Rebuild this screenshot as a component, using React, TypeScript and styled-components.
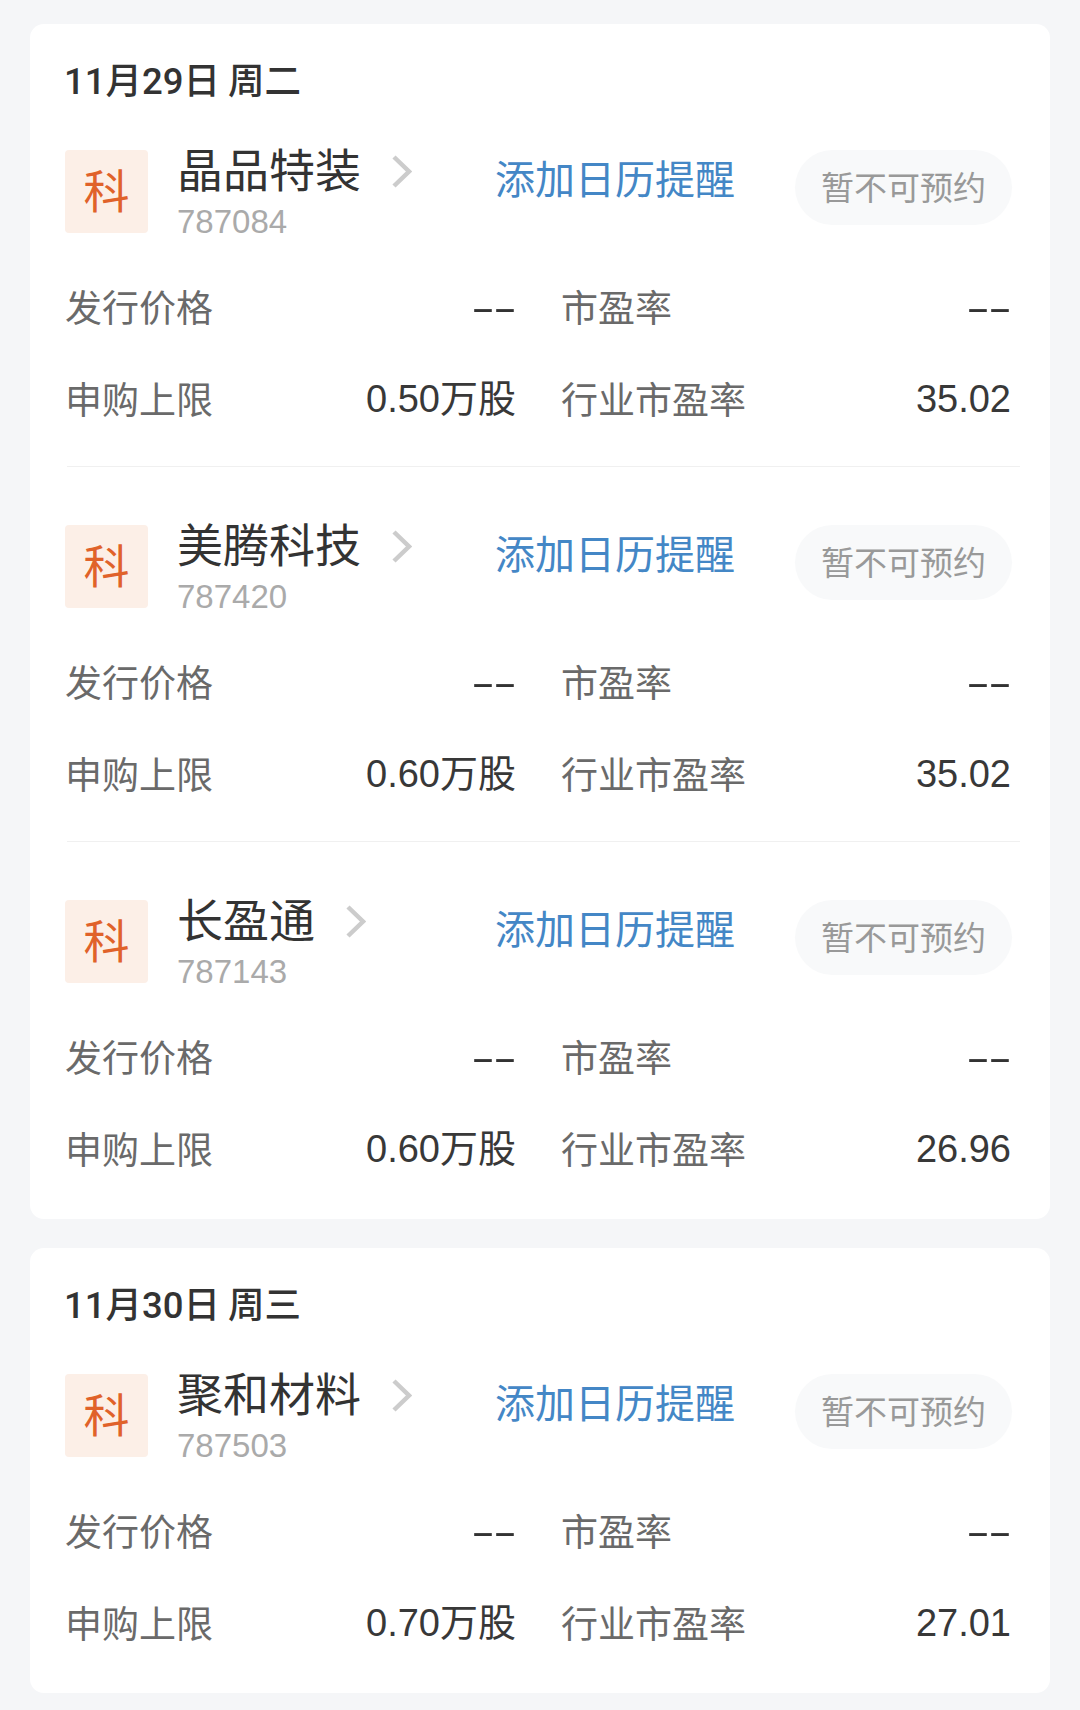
import React from "react";
import styled, { createGlobalStyle } from "styled-components";

const Global = createGlobalStyle`
  html, body { margin: 0; padding: 0; background: #f5f6f8; }
  body { font-family: "Liberation Sans", "Noto Sans CJK SC", sans-serif; }
  * { box-sizing: border-box; }
`;

const Page = styled.div`
  width: 1080px;
  height: 1710px;
  padding: 24px 30px 0;
  display: flex;
  flex-direction: column;
  gap: 29px;
  overflow: hidden;
`;

const Card = styled.section`
  width: 1020px;
  background: #ffffff;
  border-radius: 14px;
  padding: 0 0 25px 35px;
`;

const DateTitle = styled.h2`
  height: 126px;
  margin: 0 0 0 -1px;
  padding-top: 33px;
  font-family: Roboto, "Noto Sans CJK SC", sans-serif;
  font-size: 36.5px;
  line-height: 50px;
  font-weight: 500;
  word-spacing: -1px;
  color: #333333;
  white-space: pre;
`;

const Entry = styled.div`
  width: 955px;
  & + & {
    margin-top: 58px;
  }
`;

const Head = styled.div`
  display: flex;
  align-items: flex-start;
  height: 83px;
`;

const Identity = styled.div`
  width: 430px;
  flex: none;
  display: flex;
  align-items: flex-start;
`;

const Badge = styled.div`
  width: 83px;
  height: 83px;
  flex: none;
  display: flex;
  align-items: center;
  justify-content: center;
  background: #fcefe7;
  border-radius: 4px;
  color: #e0622a;
  font-size: 46px;
  line-height: 1;
`;

const Info = styled.div`
  margin-left: 29px;
  display: flex;
  flex-direction: column;
`;

const NameRow = styled.div`
  display: flex;
  align-items: center;
  height: 42px;
`;

const Name = styled.span`
  font-size: 46px;
  line-height: 42px;
  color: #333333;
  white-space: nowrap;
`;

const Chevron = styled.svg`
  width: 20px;
  height: 33px;
  margin-left: 31px;
  flex: none;
  fill: none;
  stroke: #cccccc;
  stroke-width: 4.5;
`;

const Code = styled.div`
  margin-top: 18px;
  font-size: 33px;
  line-height: 24px;
  color: #aaaaaa;
`;

const CalendarLink = styled.a`
  width: 300px;
  flex: none;
  font-size: 40px;
  line-height: 60px;
  color: #4487c6;
`;

const Pill = styled.div`
  width: 217px;
  height: 75px;
  flex: none;
  border-radius: 38px;
  background: #f8f9fa;
  padding-bottom: 4px;
  display: flex;
  align-items: center;
  justify-content: center;
  font-size: 33px;
  color: #999999;
`;

const Stats = styled.div`
  margin-top: 27px;
  width: 946px;
  display: grid;
  grid-template-columns: 451px 450px;
  column-gap: 45px;
  grid-auto-rows: 92px;
`;

const Stat = styled.div`
  display: flex;
  align-items: center;
  justify-content: space-between;
`;

const Label = styled.span`
  padding-top: 8px;
  font-size: 37px;
  line-height: 44px;
  color: #6a6a6a;
`;

const Value = styled.span`
  padding-top: 2px;
  font-size: 38px;
  line-height: 44px;
  color: #383838;
`;

const Dash = styled.span`
  font-size: 36px;
  line-height: 1;
  color: #333333;
  letter-spacing: -1px;
  transform: translate(-1px, 2px) scaleX(2);
  transform-origin: right center;
`;

const Divider = styled.hr`
  border: 0;
  height: 1px;
  margin: 22px 0 0 2px;
  width: 953px;
  background: #f0f0f0;
`;

type Item = { name: string; code: string; limit: string; pe: string };

const groups: { date: string; items: Item[] }[] = [
  {
    date: "11月29日 周二",
    items: [
      { name: "晶品特装", code: "787084", limit: "0.50万股", pe: "35.02" },
      { name: "美腾科技", code: "787420", limit: "0.60万股", pe: "35.02" },
      { name: "长盈通", code: "787143", limit: "0.60万股", pe: "26.96" },
    ],
  },
  {
    date: "11月30日 周三",
    items: [{ name: "聚和材料", code: "787503", limit: "0.70万股", pe: "27.01" }],
  },
];

export default function App() {
  return (
    <>
      <Global />
      <Page>
        {groups.map((g) => (
          <Card key={g.date}>
            <DateTitle>{g.date}</DateTitle>
            {g.items.map((it, i) => (
              <Entry key={it.code}>
                <Head>
                  <Identity>
                    <Badge>科</Badge>
                    <Info>
                      <NameRow>
                        <Name>{it.name}</Name>
                        <Chevron viewBox="0 0 20 33">
                          <path d="M2 2 L17 16.5 L2 31" />
                        </Chevron>
                      </NameRow>
                      <Code>{it.code}</Code>
                    </Info>
                  </Identity>
                  <CalendarLink>添加日历提醒</CalendarLink>
                  <Pill>暂不可预约</Pill>
                </Head>
                <Stats>
                  <Stat>
                    <Label>发行价格</Label>
                    <Dash>--</Dash>
                  </Stat>
                  <Stat>
                    <Label>市盈率</Label>
                    <Dash>--</Dash>
                  </Stat>
                  <Stat>
                    <Label>申购上限</Label>
                    <Value>{it.limit}</Value>
                  </Stat>
                  <Stat>
                    <Label>行业市盈率</Label>
                    <Value>{it.pe}</Value>
                  </Stat>
                </Stats>
                {i < g.items.length - 1 && <Divider />}
              </Entry>
            ))}
          </Card>
        ))}
      </Page>
    </>
  );
}
